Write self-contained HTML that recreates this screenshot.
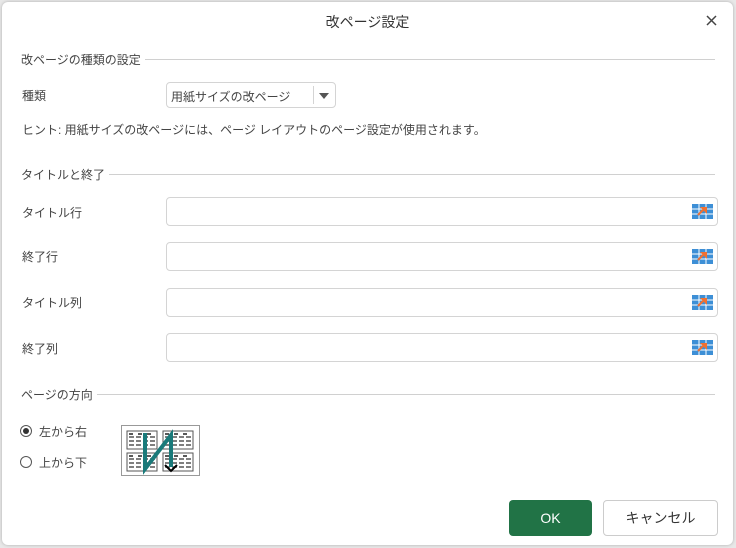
<!DOCTYPE html>
<html><head><meta charset="utf-8"><style>
body{margin:0;width:736px;height:548px;background:#e8e8e8;font-family:"Liberation Sans","Noto Sans CJK JP",sans-serif;color:#444;font-size:12px;position:relative;overflow:hidden}
.dlg{position:absolute;left:2px;top:2px;width:731px;height:543px;background:#fff;border-radius:6px;box-shadow:0 0 3px rgba(0,0,0,.25)}
.a{position:absolute;white-space:nowrap}
.sec{position:absolute;left:19px;right:18px;height:14px;display:flex;align-items:center}
.sec span{padding-right:4px}.sec i{flex:1;border-top:1px solid #d0d0d0}
.in{position:absolute;left:164px;width:550px;height:27px;border:1px solid #d4d4d4;border-radius:4px}
.ic{position:absolute;right:4px;top:6px}
</style></head><body>
<div class="dlg">
<div class="a" style="left:0;right:0;top:10px;text-align:center;font-size:14px;color:#333">改ページ設定</div>
<svg class="a" style="left:704px;top:13px" width="11" height="11"><path d="M1 1L10 10M10 1L1 10" stroke="#444" stroke-width="1.5"/></svg>
<div class="sec" style="top:50px"><span>改ページの種類の設定</span><i></i></div>
<div class="a" style="left:20px;top:85px">種類</div>
<div class="a" style="left:164px;top:80px;width:168px;height:24px;border:1px solid #d4d4d4;border-radius:4px"><span style="position:absolute;left:4px;top:5px">用紙サイズの改ページ</span><span style="position:absolute;left:146px;top:3px;height:18px;border-left:1px solid #d4d4d4"></span><span style="position:absolute;left:152px;top:10px;border:5px solid transparent;border-top:6px solid #555"></span></div>
<div class="a" style="left:20px;top:119px">ヒント: 用紙サイズの改ページには、ページ レイアウトのページ設定が使用されます。</div>
<div class="sec" style="top:165px"><span>タイトルと終了</span><i></i></div>
<div class="a" style="left:20px;top:202px">タイトル行</div>
<div class="in" style="top:195px"><svg class="ic" width="21" height="15"><rect width="21" height="15" fill="#3d8fd6"/><path d="M0 5H21M0 10H21M7 0V15M14 0V15" stroke="#fff" stroke-width="1"/><path d="M8 3L15 3L15 10Z" fill="#f07030"/><path d="M11 6L6 11" stroke="#f07030" stroke-width="2"/></svg></div>
<div class="a" style="left:20px;top:246px">終了行</div>
<div class="in" style="top:240px"><svg class="ic" width="21" height="15"><rect width="21" height="15" fill="#3d8fd6"/><path d="M0 5H21M0 10H21M7 0V15M14 0V15" stroke="#fff" stroke-width="1"/><path d="M8 3L15 3L15 10Z" fill="#f07030"/><path d="M11 6L6 11" stroke="#f07030" stroke-width="2"/></svg></div>
<div class="a" style="left:20px;top:292px">タイトル列</div>
<div class="in" style="top:286px"><svg class="ic" width="21" height="15"><rect width="21" height="15" fill="#3d8fd6"/><path d="M0 5H21M0 10H21M7 0V15M14 0V15" stroke="#fff" stroke-width="1"/><path d="M8 3L15 3L15 10Z" fill="#f07030"/><path d="M11 6L6 11" stroke="#f07030" stroke-width="2"/></svg></div>
<div class="a" style="left:20px;top:338px">終了列</div>
<div class="in" style="top:331px"><svg class="ic" width="21" height="15"><rect width="21" height="15" fill="#3d8fd6"/><path d="M0 5H21M0 10H21M7 0V15M14 0V15" stroke="#fff" stroke-width="1"/><path d="M8 3L15 3L15 10Z" fill="#f07030"/><path d="M11 6L6 11" stroke="#f07030" stroke-width="2"/></svg></div>
<div class="sec" style="top:385px"><span>ページの方向</span><i></i></div>
<div class="a" style="left:18px;top:423px;width:10px;height:10px;border:1px solid #555;border-radius:50%"><div style="margin:2px;width:6px;height:6px;border-radius:50%;background:#333"></div></div>
<div class="a" style="left:37px;top:421px">左から右</div>
<div class="a" style="left:18px;top:454px;width:10px;height:10px;border:1px solid #555;border-radius:50%"></div>
<div class="a" style="left:37px;top:452px">上から下</div>
<svg class="a" style="left:119px;top:423px" width="80" height="52"><rect x=".5" y=".5" width="78" height="50" fill="#fff" stroke="#999"/><g fill="#fff" stroke="#555" stroke-width="1"><rect x="6" y="6" width="30" height="18"/><rect x="42" y="6" width="30" height="18"/><rect x="6" y="28" width="30" height="18"/><rect x="42" y="28" width="30" height="18"/></g><g stroke="#555" stroke-width="1.5" stroke-dasharray="5 2"><path d="M8 12H34M8 16H34M8 20H34M44 12H70M44 16H70M44 20H70M8 34H34M8 38H34M8 42H34M44 34H70M44 38H70M44 42H70"/></g><path d="M8 9H34M44 9H70M8 31H34M44 31H70" stroke="#222" stroke-width="1.5" stroke-dasharray="4 5"/><path d="M24 8V44L50 10V42" stroke="#1a7a7a" stroke-width="4" fill="none"/><path d="M44 40l6 6 6-6" stroke="#000" stroke-width="2" fill="none"/></svg>
<div class="a" style="left:507px;top:498px;width:83px;height:36px;background:#217346;border-radius:4px;color:#fff;font-size:14px;text-align:center;line-height:36px">OK</div>
<div class="a" style="left:601px;top:498px;width:113px;height:34px;border:1px solid #ccc;border-radius:4px;color:#333;font-size:14px;text-align:center;line-height:34px">キャンセル</div>
</div>
</body></html>
